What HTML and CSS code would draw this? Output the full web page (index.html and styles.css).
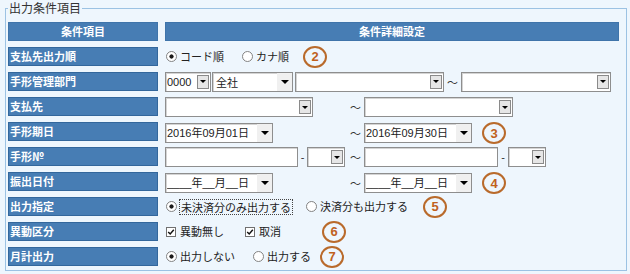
FILE: index.html
```html
<!DOCTYPE html>
<html lang="ja">
<head>
<meta charset="utf-8">
<title>出力条件項目</title>
<link rel="stylesheet" href="styles.css">
</head>
<body>
<fieldset class="panel">
  <legend class="panel-title">出力条件項目</legend>
  <div class="grid">
    <div class="head">条件項目</div>
    <div class="head">条件詳細設定</div>

    <div class="label">支払先出力順</div>
    <div class="cell">
      <label class="opt ml-1"><input type="radio" class="radio" name="order" checked><span>コード順</span></label>
      <label class="opt ml-18"><input type="radio" class="radio" name="order"><span>カナ順</span></label>
      <span class="badge ml-14">2</span>
    </div>

    <div class="label">手形管理部門</div>
    <div class="cell">
      <div class="select w46"><span class="val">0000</span><span class="btn"><i class="tri"></i></span></div>
      <div class="select flat w81 ml-1"><span class="val jp">全社</span><span class="btn"><i class="tri"></i></span></div>
      <div class="select w149 ml-2"><span class="val"></span><span class="btn"><i class="tri"></i></span></div>
      <span class="tilde">～</span>
      <div class="select w150"><span class="val"></span><span class="btn"><i class="tri"></i></span></div>
    </div>

    <div class="label">支払先</div>
    <div class="cell pair">
      <div class="side"><div class="select w148"><span class="val"></span><span class="btn"><i class="tri"></i></span></div></div>
      <span class="tilde">～</span>
      <div class="side"><div class="select w149"><span class="val"></span><span class="btn"><i class="tri"></i></span></div></div>
    </div>

    <div class="label">手形期日</div>
    <div class="cell pair">
      <div class="side"><div class="select flat w108"><span class="val">2016年09月01日</span><span class="btn"><i class="tri"></i></span></div></div>
      <span class="tilde">～</span>
      <div class="side">
        <div class="select flat w108"><span class="val">2016年09月30日</span><span class="btn"><i class="tri"></i></span></div>
        <span class="badge ml-10">3</span>
      </div>
    </div>

    <div class="label">手形№</div>
    <div class="cell pair">
      <div class="side">
        <span class="field w133"></span>
        <span class="dash">-</span>
        <div class="select w38"><span class="val"></span><span class="btn"><i class="tri"></i></span></div>
      </div>
      <span class="tilde">～</span>
      <div class="side">
        <span class="field w134"></span>
        <span class="dash w10">-</span>
        <div class="select w38"><span class="val"></span><span class="btn"><i class="tri"></i></span></div>
      </div>
    </div>

    <div class="label">振出日付</div>
    <div class="cell pair">
      <div class="side"><div class="select flat w108"><span class="val">____年__月__日</span><span class="btn"><i class="tri"></i></span></div></div>
      <span class="tilde">～</span>
      <div class="side">
        <div class="select flat w108"><span class="val">____年__月__日</span><span class="btn"><i class="tri"></i></span></div>
        <span class="badge ml-10">4</span>
      </div>
    </div>

    <div class="label">出力指定</div>
    <div class="cell">
      <label class="opt ml-1 tight"><input type="radio" class="radio" name="out" checked><span class="focus">未決済分のみ出力する</span></label>
      <label class="opt ml-13"><input type="radio" class="radio" name="out"><span>決済分も出力する</span></label>
      <span class="badge ml-15">5</span>
    </div>

    <div class="label">異動区分</div>
    <div class="cell">
      <label class="opt ml-1 wide"><span class="check"><svg viewBox="0 0 10 10" width="8" height="8"><path d="M1.5 5 L4 7.5 L8.5 2.2" fill="none" stroke="#111" stroke-width="1.8"/></svg></span><span>異動無し</span></label>
      <label class="opt ml-21 wide"><span class="check"><svg viewBox="0 0 10 10" width="8" height="8"><path d="M1.5 5 L4 7.5 L8.5 2.2" fill="none" stroke="#111" stroke-width="1.8"/></svg></span><span>取消</span></label>
      <span class="badge ml-41">6</span>
    </div>

    <div class="label">月計出力</div>
    <div class="cell">
      <label class="opt ml-1"><input type="radio" class="radio" name="month" checked><span>出力しない</span></label>
      <label class="opt ml-18"><input type="radio" class="radio" name="month"><span>出力する</span></label>
      <span class="badge ml-9">7</span>
    </div>
  </div>
</fieldset>
</body>
</html>
```

FILE: styles.css
```css
html, body {
  margin: 0;
  padding: 0;
}

body {
  width: 630px;
  height: 274px;
  overflow: hidden;
  background: #eef6fd;
  font-family: "Liberation Sans", "Noto Sans CJK JP", sans-serif;
  font-size: 11px;
  color: #222;
}

.panel {
  margin: 0 3px 0 5px;
  padding: 6px 7px 4px 2px;
  border: 1px solid #9cc2e3;
  min-width: 0;
}

.panel-title {
  margin: 0;
  padding: 0 1px;
  font-family: "Noto Sans CJK JP", sans-serif;
  font-size: 12px;
  line-height: 16px;
  color: #333;
}

.grid {
  display: grid;
  grid-template-columns: 150px 1fr;
  grid-auto-rows: 19px;
  column-gap: 7px;
  row-gap: 6px;
}

.head,
.label {
  box-sizing: border-box;
  background: #477db4;
  border: 1px solid #33679c;
  color: #fff;
  font-family: "Noto Sans CJK JP", sans-serif;
  font-weight: bold;
  font-size: 11px;
  line-height: 17px;
  white-space: nowrap;
}

.head {
  text-align: center;
  border-color: #3f74aa;
}

.label {
  padding-left: 1px;
}

.cell {
  display: flex;
  align-items: center;
  min-width: 0;
  white-space: nowrap;
}

.pair {
  display: grid;
  grid-template-columns: 183px 16px auto;
  align-items: center;
}

.side {
  display: flex;
  align-items: center;
}

.opt {
  display: inline-flex;
  align-items: center;
  gap: 3px;
  font-family: "Noto Sans CJK JP", sans-serif;
  line-height: 15px;
}

.opt.tight {
  gap: 2px;
}

.opt.wide {
  gap: 4px;
}

.radio {
  appearance: none;
  -webkit-appearance: none;
  margin: 0;
  width: 11px;
  height: 11px;
  box-sizing: border-box;
  border: 1px solid #838383;
  border-radius: 50%;
  background: #fff;
}

.radio:checked {
  background: radial-gradient(circle at center, #1a1a1a 0 1.8px, #fff 2.4px);
}

.check {
  width: 10px;
  height: 10px;
  box-sizing: border-box;
  border: 1px solid #707070;
  background: #fff;
  display: inline-flex;
  align-items: center;
  justify-content: center;
}

.check svg {
  display: block;
}

.focus {
  border: 1px dotted #444;
  padding: 0 1px;
  line-height: 14px;
}

.badge {
  flex: none;
  width: 24px;
  height: 22px;
  box-sizing: border-box;
  border: 2px solid #b96a2b;
  border-radius: 50%;
  display: flex;
  align-items: center;
  justify-content: center;
  color: #c0611d;
  font-family: "Liberation Sans", sans-serif;
  font-weight: bold;
  font-size: 13px;
}

.select {
  flex: none;
  display: flex;
  align-items: center;
  height: 20px;
  box-sizing: border-box;
  border: 1px solid #8e8e8e;
  box-shadow: inset 1px 1px 0 #d4d4d4;
  background: #fff;
  padding-left: 1px;
  overflow: hidden;
}

.select .val {
  flex: 1;
  min-width: 0;
  white-space: nowrap;
  overflow: hidden;
  line-height: 18px;
}

.select .val.jp {
  font-family: "Noto Sans CJK JP", sans-serif;
  padding-left: 2px;
}

.select .btn {
  flex: none;
  width: 12px;
  height: 14px;
  margin-right: 1px;
  box-sizing: border-box;
  border: 1px solid #8a8a8a;
  background: #e6e6e6;
  display: flex;
  align-items: center;
  justify-content: center;
}

.tri {
  display: block;
  width: 0;
  height: 0;
  border-style: solid;
  border-width: 3px 3px 0;
  border-color: #000 transparent transparent;
}

.select.flat .btn {
  width: 15px;
  height: 18px;
  margin-right: 0;
  border: 0;
  background: #f0f0f0;
}

.select.flat .tri {
  border-width: 4px 4px 0;
}

.field {
  flex: none;
  display: block;
  height: 20px;
  box-sizing: border-box;
  border: 1px solid #8e8e8e;
  box-shadow: inset 1px 1px 0 #d4d4d4;
  background: #fff;
}

.tilde {
  font-family: "Noto Sans CJK JP", sans-serif;
  font-size: 11px;
  color: #333;
  margin: 0 3px;
}

.pair .tilde {
  margin: 0 0 0 2px;
}

.dash {
  width: 9px;
  text-align: center;
  color: #333;
}

.w10 { width: 10px; }
.w38 { width: 38px; }
.w46 { width: 46px; }
.w81 { width: 81px; }
.w108 { width: 108px; }
.w133 { width: 133px; }
.w134 { width: 134px; }
.w148 { width: 148px; }
.w149 { width: 149px; }
.w150 { width: 150px; }

.ml-1 { margin-left: 1px; }
.ml-2 { margin-left: 2px; }
.ml-9 { margin-left: 9px; }
.ml-10 { margin-left: 10px; }
.ml-13 { margin-left: 13px; }
.ml-14 { margin-left: 14px; }
.ml-15 { margin-left: 15px; }
.ml-18 { margin-left: 18px; }
.ml-21 { margin-left: 21px; }
.ml-41 { margin-left: 41px; }
```
